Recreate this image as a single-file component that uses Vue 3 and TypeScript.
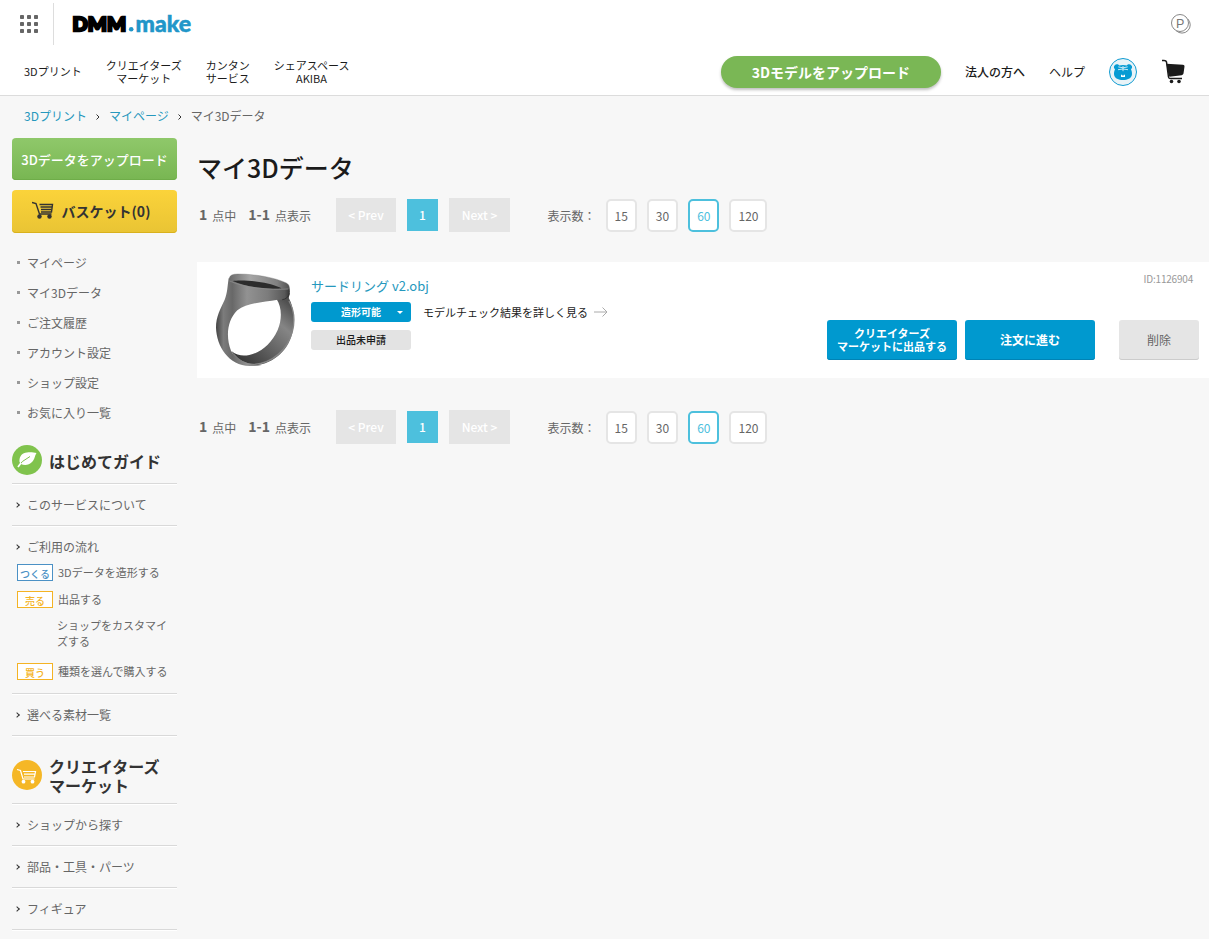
<script setup lang="ts">
interface NavItem { lines: string[] }
const nav: NavItem[] = [
  { lines: ['3Dプリント'] },
  { lines: ['クリエイターズ', 'マーケット'] },
  { lines: ['カンタン', 'サービス'] },
  { lines: ['シェアスペース', 'AKIBA'] },
]
const accountLinks: string[] = ['マイページ', 'マイ3Dデータ', 'ご注文履歴', 'アカウント設定', 'ショップ設定', 'お気に入り一覧']
const marketLinks: string[] = ['ショップから探す', '部品・工具・パーツ', 'フィギュア']
const pageSizes: number[] = [15, 30, 60, 120]
const currentSize = 60
const pagers: string[] = ['top', 'bottom']
const dots: number[] = [0, 7, 14]
</script>

<template>
  <div class="page">
    <header class="header">
      <div class="brand-row">
        <svg class="apps" width="18" height="18" viewBox="0 0 18 18">
          <template v-for="y in dots" :key="y">
            <rect v-for="x in dots" :key="x" :x="x" :y="y" width="4" height="4" rx=".8" fill="#666" />
          </template>
        </svg>
        <span class="divider"></span>
        <svg class="logo" width="120" height="24" viewBox="0 0 120 24">
          <text class="logo-dmm" x=".5" y="19" textLength="53.500" lengthAdjust="spacingAndGlyphs">DMM</text>
          <circle cx="59.2" cy="17.3" r="2.3" fill="#2196c9" />
          <text class="logo-make" x="63.5" y="19.5" textLength="55.5" lengthAdjust="spacingAndGlyphs">make</text>
        </svg>
        <svg class="point" width="20" height="20" viewBox="0 0 20 20" fill="none" stroke="#888">
          <circle cx="9" cy="9" r="8.5" />
          <path d="M16.8 5A8 8 0 1 1 5.2 16.700" />
          <text class="point-letter" x="5" y="13.500">P</text>
        </svg>
      </div>
      <div class="nav-row">
        <nav class="nav">
          <a v-for="item in nav" :key="item.lines[0]"><span v-for="line in item.lines" :key="line">{{ line }}</span></a>
        </nav>
        <div class="tools">
          <a class="upload-pill">3Dモデルをアップロード</a>
          <a class="corp">法人の方へ</a>
          <a class="help">ヘルプ</a>
          <svg class="avatar" width="28" height="28" viewBox="0 0 28 28">
            <circle cx="14" cy="14" r="13.5" fill="#e9f3f7" stroke="#109bd1" />
            <path d="M5.500 7.400C7 5.800 9.400 6.200 10.200 7.500Q14 6.400 17.800 7.500C18.600 6.200 21 5.800 22.500 7.400C23.600 8.800 23 10.500 22 11.200C22.800 13 23.200 15 22.900 17C22 20.600 18.600 22 14 22S6 20.600 5.100 17C4.800 15 5.200 13 6 11.200C5 10.500 4.400 8.800 5.500 7.400Z" fill="#079bd3" />
            <path d="M9.300 8.900Q14 10.700 18.700 8.900M9 11.700Q14 10.300 19 11.700M14 8V13.200" fill="none" stroke="#d9f0f7" stroke-width=".9" />
            <path d="M12 16.700h1.200v.8h1.600v-.8H16v2.300h-4Z" fill="#fff" />
          </svg>
          <svg class="cart" width="23" height="25" viewBox="0 0 23 25">
            <path d="M0 1.500H2Q4.200 1.500 4.500 3L6.500 18Q6.700 19.500 8 19.500H20" fill="none" stroke="#1b1b1b" stroke-width="1.500" />
            <path d="M4.500 4.800L21 5.800Q22.700 6 22.500 7.600L21.500 14.600Q21.200 16 19.700 16.200L7.500 17.800Q6 15 5.500 11Z" fill="#1b1b1b" />
            <circle cx="9.500" cy="22.500" r="1.800" fill="#1b1b1b" /><circle cx="17" cy="22.500" r="1.800" fill="#1b1b1b" />
          </svg>
        </div>
      </div>
    </header>

    <div class="crumbs">
      <a>3Dプリント</a>
      <svg width="4" height="6" viewBox="0 0 4 6"><path d="M.5.5L3 3L.5 5.500" /></svg>
      <a>マイページ</a>
      <svg width="4" height="6" viewBox="0 0 4 6"><path d="M.5.5L3 3L.5 5.500" /></svg>
      <span>マイ3Dデータ</span>
    </div>

    <div class="columns">
      <aside class="sidebar">
        <a class="side-upload">3Dデータをアップロード</a>
        <a class="basket">
          <svg width="22" height="18" viewBox="0 0 22 18">
            <path d="M0 1.500L4 2.500L7.500 13H19.500" fill="none" stroke="#333" stroke-width="1.400" />
            <path d="M7.500 3.500H20.500L19.500 11H9" fill="none" stroke="#333" stroke-width="1.400" />
            <path d="M8.500 6H20M9 8.500H19.500" fill="none" stroke="#333" stroke-width="1.400" />
            <circle cx="7.500" cy="15.500" r="2.200" fill="#333" /><circle cx="17.500" cy="15.500" r="2.200" fill="#333" />
          </svg>
          <span>バスケット(0)</span>
        </a>
        <ul class="account">
          <li v-for="link in accountLinks" :key="link">{{ link }}</li>
        </ul>

        <h2 class="guide-title">
          <svg width="30" height="30" viewBox="0 0 30 30">
            <circle cx="15" cy="15" r="15" fill="#80c34d" />
            <path d="M7.500 17C7 11 10.500 7.700 15 7.500C19 7 22 7.700 24.500 8C22.500 11 23 14 20 17C17 20.500 12 20.700 9 19Z" fill="#fff" />
            <path d="M5.500 22.500Q9 16 18 11.500" fill="none" stroke="#80c34d" stroke-width="1" />
            <path d="M6 22L9 18" fill="none" stroke="#fff" stroke-width="1.700" />
          </svg>
          <span>はじめてガイド</span>
        </h2>
        <div class="row"><i class="chev"></i>このサービスについて</div>
        <div class="flow">
          <div class="flow-head"><i class="chev"></i>ご利用の流れ</div>
          <div class="step make"><b>つくる</b><span>3Dデータを造形する</span></div>
          <div class="step sell"><b>売る</b><span>出品する</span></div>
          <div class="sub-step">ショップをカスタマイズする</div>
          <div class="step buy"><b>買う</b><span>種類を選んで購入する</span></div>
        </div>
        <div class="row"><i class="chev"></i>選べる素材一覧</div>

        <h2 class="market-title">
          <svg width="30" height="30" viewBox="0 0 30 30">
            <circle cx="15" cy="15" r="15" fill="#f5b726" />
            <path d="M5 9.500L8.500 10.500L11 19H22.500" fill="none" stroke="#fff" stroke-width="1.200" />
            <path d="M11 11.500H23.500L22.500 17H12M12 14.200H23" fill="none" stroke="#fff" stroke-width="1.200" />
            <circle cx="11.500" cy="21.700" r="1.900" fill="#fff" /><circle cx="20.500" cy="21.700" r="1.900" fill="#fff" />
          </svg>
          <span>クリエイターズ<br>マーケット</span>
        </h2>
        <div v-for="link in marketLinks" :key="link" class="row"><i class="chev"></i>{{ link }}</div>
      </aside>

      <main class="main">
        <h1>マイ3Dデータ</h1>
        <template v-for="place in pagers" :key="place">
          <div class="pager">
            <div class="count"><b>1</b><span class="total">点中</span><b>1-1</b><span>点表示</span></div>
            <span class="step-btn prev">&lt; Prev</span>
            <span class="current">1</span>
            <span class="step-btn next">Next &gt;</span>
            <span class="size-label">表示数：</span>
            <span v-for="size in pageSizes" :key="size" class="size" :class="{ active: size === currentSize }">{{ size }}</span>
          </div>
          <section v-if="place === 'top'" class="card">
            <svg class="ring" width="80" height="94" viewBox="60 54 240 282">
              <defs>
                <linearGradient id="band" x1="0" y1="0" x2="1" y2="0">
                  <stop offset="0" stop-color="#444" /><stop offset=".1" stop-color="#7c7c7c" /><stop offset=".22" stop-color="#686868" />
                  <stop offset=".42" stop-color="#929292" /><stop offset=".7" stop-color="#7c7c7c" /><stop offset=".93" stop-color="#585858" /><stop offset="1" stop-color="#333" />
                </linearGradient>
                <linearGradient id="inside" x1="0" y1="1" x2=".8" y2="0">
                  <stop offset="0" stop-color="#292929" /><stop offset=".4" stop-color="#5c5c5c" /><stop offset=".75" stop-color="#858585" /><stop offset="1" stop-color="#505050" />
                </linearGradient>
                <linearGradient id="face" x1="0" y1="0" x2="1" y2="0">
                  <stop offset="0" stop-color="#6a6a6a" /><stop offset=".35" stop-color="#a6a6a6" /><stop offset=".8" stop-color="#808080" /><stop offset="1" stop-color="#505050" />
                </linearGradient>
              </defs>
              <path d="M245 133L280 126C296 155 300 190 294 225C284 282 240 327 174 332C142 330 122 313 110 289C126 302 145 304 163 300C200 292 230 265 248 225C263 188 259 155 245 133Z" fill="url(#inside)" />
              <path d="M282 138C299 168 299 203 292 230C278 284 232 325 177 328C150 329 128 313 114 296" fill="none" stroke="#858585" stroke-width="4" />
              <path d="M101 70C97 94 98 112 89 134C77 160 63 184 63 218C65 275 101 331 164 333Q185 334 200 330C157 330 122 314 108 287C92 245 96 197 127 166C154 144 203 141 248 134Q270 136 281 128Q287 112 283 97Z" fill="url(#band)" />
              <path d="M103 69Q105 57 128 57C181 57 242 68 274 84Q287 92 281 101C225 103 146 97 108 79Q101 74 103 69Z" fill="url(#face)" stroke="#6d6d6d" />
              <path d="M113 78C142 73 215 80 253 97C263 101 258 101 250 101C205 101 147 95 113 78Z" fill="#2c2c2c" />
              <path d="M104 78C148 99 226 106 280 102" fill="none" stroke="#929292" stroke-width="2" />
              <path d="M262 134Q278 132 283 115" fill="none" stroke="#333" stroke-width="3" />
            </svg>
            <div class="details">
              <a class="title">サードリング v2.obj</a>
              <div class="check"><span class="status">造形可能<i></i></span><a>モデルチェック結果を詳しく見る</a>
                <svg width="14" height="10" viewBox="0 0 14 10"><path d="M0 5H13M8.500.5L13 5L8.500 9.500" fill="none" stroke="#aaa" /></svg>
              </div>
              <span class="unlisted">出品未申請</span>
            </div>
            <div class="side">
              <span class="model-id">ID:1126904</span>
              <div class="actions">
                <a class="action list">クリエイターズ<br>マーケットに出品する</a>
                <a class="action order">注文に進む</a>
                <a class="action delete">削除</a>
              </div>
            </div>
          </section>
        </template>
      </main>
    </div>
  </div>
</template>

<style>
body { margin: 0; background: #f7f7f7; }
</style>

<style scoped>
* { box-sizing: border-box; }
.page { height: 939px; overflow: hidden; background: #f7f7f7; color: #666; font: 12px/18px "Noto Sans CJK JP", sans-serif; }
svg { display: block; flex: none; }
.header { height: 96px; background: #fff; border-bottom: 1px solid #dcdcdc; color: #1b1b1b; }
.brand-row { height: 48px; display: flex; align-items: center; padding: 0 18px 0 20px; }
.divider { width: 1px; height: 42px; margin: 0 18px 0 15px; background: #ddd; }
.logo { overflow: visible; }
.logo-dmm { font: 900 19.500px Lato, sans-serif; fill: #000; stroke: #000; stroke-width: 2.400px; stroke-linejoin: miter; }
.logo-make { font: 900 22px Lato, sans-serif; fill: #2196c9; stroke: #2196c9; stroke-width: .5px; }
.point { margin-left: auto; }
.point-letter { font: 12.500px "Liberation Sans", sans-serif; fill: #777; stroke: none; }
.nav-row { height: 47px; display: flex; justify-content: space-between; align-items: center; padding: 0 24px; }
.nav { display: flex; align-items: center; gap: 24px; font-size: 11px; line-height: 13px; text-align: center; }
.nav span { display: block; white-space: nowrap; }
.tools { display: flex; align-items: center; gap: 24px; white-space: nowrap; }
.upload-pill { width: 220px; height: 32px; border-radius: 16px; background: #7ab755; color: #fff; font-size: 14px; font-weight: 700; line-height: 32px; text-align: center; box-shadow: 0 2px 3px rgba(0, 0, 0, .25); }
.corp { font-weight: 500; }
.cart { margin-left: 1px; }

.crumbs { height: 42px; display: flex; align-items: center; gap: 9px; padding: 0 0 2px 24px; }
.crumbs a { color: #2698bd; }
.crumbs svg { margin-top: 1px; }
.crumbs path { fill: none; stroke: #333; }
.columns { display: flex; gap: 20px; padding-left: 12px; }
.sidebar { width: 165px; flex: none; }
.side-upload, .basket { display: flex; align-items: center; justify-content: center; border-radius: 4px; white-space: nowrap; }
.side-upload { height: 42px; background: linear-gradient(#8fc86a, #78b652); box-shadow: inset 0 -1px #6fad49; color: #fff; font-size: 13px; font-weight: 500; padding-top: 1px; }
.basket { height: 43px; margin-top: 10px; padding: 0 7px 2px 0; gap: 8px; background: linear-gradient(#fbd33a, #e9c434); box-shadow: inset 0 -1px #d9b11d; color: #333; font-size: 14px; font-weight: 700; }
.basket svg { margin-top: -1px; }
.account { list-style: none; margin: 15px 0 0; padding: 0; }
.account li { height: 30px; display: flex; align-items: center; gap: 7px; padding-left: 5px; }
.account li::before { content: ""; width: 3px; height: 3px; background: #999; margin-top: -2px; }
h2 { margin: 0; display: flex; align-items: center; gap: 7px; color: #333; font-size: 16px; line-height: 19px; font-weight: 700; border-bottom: 1px solid #d9d9d9; box-shadow: 0 1px #fff; white-space: nowrap; }
.guide-title { height: 47px; margin-top: 9px; }
.guide-title span { padding-top: 2px; }
.market-title { height: 57px; margin-top: 11px; }
.market-title span { padding-top: 2px; }
.row { height: 42px; display: flex; align-items: center; padding: 1px 0 0 5px; border-bottom: 1px solid #d9d9d9; box-shadow: 0 1px #fff; }
.chev { width: 4px; height: 4px; margin: 0 8px 0 -2px; border: solid #333; border-width: 1px 1px 0 0; transform: rotate(45deg); }
.flow { height: 168px; padding-left: 5px; border-bottom: 1px solid #d9d9d9; box-shadow: 0 1px #fff; }
.flow-head { display: flex; align-items: center; height: 38px; padding-top: 4px; }
.step { display: flex; align-items: center; gap: 5px; height: 17px; font-size: 11px; white-space: nowrap; }
.step b { width: 36px; height: 17px; border: 1px solid #f4b324; background: #fff; color: #f4b324; font-size: 10px; font-weight: 500; line-height: 18px; text-align: center; }
.step span { margin-top: -2px; }
.make b { border-color: #4b91c5; color: #4b91c5; }
.sell { margin-top: 10px; }
.sub-step { margin: 9px 0 14px; padding-left: 40px; font-size: 11px; line-height: 16px; }

.main { flex: 1; min-width: 0; }
h1 { margin: 9px 0 11px; height: 40px; color: #1b1b1b; font-size: 25px; line-height: 40px; font-weight: 500; }
.pager { height: 34px; display: flex; align-items: center; }
.count { width: 139px; padding-left: 2px; display: flex; align-items: center; white-space: nowrap; }
.count b { font-size: 14px; margin: -2px 5px 0 0; }
.count span { margin-top: 1px; }
.count .total { margin-right: 12px; }
.step-btn { height: 34px; background: #e5e5e5; color: #fff; font-weight: 500; line-height: 34px; text-align: center; }
.prev { width: 60px; }
.next { width: 61px; }
.current { width: 31px; height: 32px; margin: 0 11px; background: #4dc0dd; color: #fff; font-weight: 500; line-height: 32px; text-align: center; }
.size-label { width: 58px; margin-left: 37.500px; padding-top: 1px; }
.size { height: 33px; margin-right: 10px; padding: 0 7px; border: 2px solid #e5e5e5; border-radius: 5px; background: #fff; line-height: 30px; text-align: center; }
.size.active { border-color: #4dc0dd; color: #4dc0dd; }

.card { height: 116px; margin: 30px 0 32px; display: flex; background: #fff; }
.ring { margin: 11px 16px 0 18px; }
.details { padding-top: 14px; }
.title { display: block; height: 20px; color: #2698bd; font-size: 13px; line-height: 20px; }
.check { display: flex; align-items: center; height: 20px; margin: 6px 0 8px; color: #1b1b1b; font-size: 11px; white-space: nowrap; }
.check > a { margin-top: -1px; }
.check svg { margin-left: 6px; }
.status, .unlisted { width: 100px; height: 20px; border-radius: 3px; font-size: 10px; line-height: 20px; text-align: center; }
.status { display: flex; align-items: center; justify-content: flex-end; gap: 16px; margin-right: 12px; padding-right: 8px; background: #0099cf; color: #fff; font-weight: 700; }
.status i { border: 3px solid transparent; border-top-color: #fff; border-bottom: 0; }
.unlisted { display: block; background: #e3e3e3; color: #1b1b1b; font-weight: 500; }
.side { margin-left: auto; padding: 8px 10px 0 0; display: flex; flex-direction: column; }
.model-id { align-self: flex-end; margin-right: 6px; color: #999; font-size: 10px; letter-spacing: -.2px; }
.actions { display: flex; margin-top: 32px; }
.action { height: 40px; border-radius: 3px; display: flex; align-items: center; justify-content: center; text-align: center; white-space: nowrap; background: #0099cf; color: #fff; font-weight: 700; box-shadow: inset 0 -1px #0083b5; }
.list { width: 130px; font-size: 11px; line-height: 13px; }
.order { width: 130px; margin: 0 24px 0 8px; }
.delete { width: 80px; background: #e5e5e5; color: #666; font-weight: 400; box-shadow: inset 0 -1px #ccc; }
</style>
